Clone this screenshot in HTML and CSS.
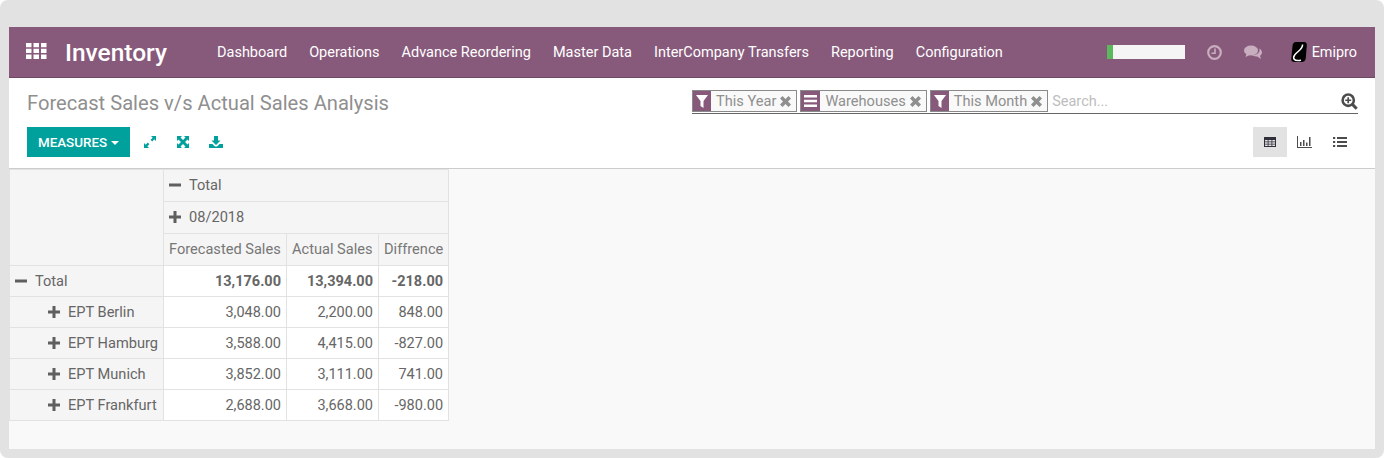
FILE: index.html
```html
<!DOCTYPE html>
<html lang="en">
<head>
<meta charset="utf-8">
<title>Forecast Sales v/s Actual Sales Analysis</title>
<link rel="stylesheet" href="styles.css">
</head>
<body>
<div class="frame">
  <div class="app">
    <nav class="navbar">
      <svg class="apps" width="21" height="16" viewBox="0 0 21 16"><path fill="#fff" d="M0 0h5.500v4.300H0zM7.500 0h5.500v4.300H7.500zM15 0h5.500v4.300H15zM0 5.800h5.500v4.300H0zM7.500 5.800h5.500v4.300H7.500zM15 5.800h5.500v4.300H15zM0 11.600h5.500v4.300H0zM7.500 11.600h5.500v4.300H7.500zM15 11.600h5.500v4.300H15z"/></svg>
      <span class="brand">Inventory</span>
      <ul class="menu">
        <li>Dashboard</li>
        <li>Operations</li>
        <li>Advance Reordering</li>
        <li>Master Data</li>
        <li>InterCompany Transfers</li>
        <li>Reporting</li>
        <li>Configuration</li>
      </ul>
      <div class="systray">
        <div class="progress"><div class="progress-fill"></div></div>
        <svg class="clock" width="15" height="15" viewBox="0 0 15 15"><circle cx="7.500" cy="7.500" r="6.300" fill="none" stroke="#c8aebf" stroke-width="2.200"/><path fill="none" stroke="#c8aebf" stroke-width="1.600" d="M8 3.500v4.700H4.500"/></svg>
        <svg class="chat" width="18" height="15" viewBox="0 0 18 15"><ellipse cx="7" cy="5.500" rx="7" ry="5" fill="#c8aebf"/><path fill="#c8aebf" d="M2.500 8.500 1.500 12 6 10z"/><path fill="#c8aebf" d="M15.300 3.600C16.900 4.500 18 5.900 18 7.400c0 1.400-.8 2.500-2 3.300l1 3.300-3.800-2.500c-2 .2-4-.2-5.300-1.400 4.500.4 8.800-2.300 7.400-6.500z"/></svg>
        <svg class="avatar" width="16" height="20" viewBox="0 0 16 20"><path fill="#000" d="M5 0h8c2.200 0 3 1.500 2.800 3.500l-1 12.500c-.2 2.500-1.800 4-4 4H3.500C1 20 0 18.500 .3 16.500L1.500 4C1.800 1.500 3 0 5 0z"/><path fill="none" stroke="#fff" stroke-width="1.500" d="M11.500 2.500C12 6 9 8 6 10.500 3 13 2 15 3 17c1 1.500 4 1.800 7 1.200"/></svg>
        <span class="user">Emipro</span>
      </div>
    </nav>
    <header class="panel">
      <div class="panel-left">
        <h1 class="title">Forecast Sales v/s Actual Sales Analysis</h1>
        <div class="actions">
          <button class="measures" type="button">MEASURES<span class="caret"></span></button>
          <svg class="tool" width="14" height="14" viewBox="0 0 14 14"><path fill="#00a09d" d="M8 1h5v5l-1.700-1.700L9.200 6.400 7.600 4.800l2.100-2.100zM6 13H1V8l1.700 1.700 2.100-2.100 1.600 1.600-2.100 2.100z"/></svg>
          <svg class="tool" width="14" height="14" viewBox="0 0 14 14"><path fill="#00a09d" d="M1 1h5L4.500 2.500 7 5l2.500-2.500L8 1h5v5l-1.500-1.500L9 7l2.500 2.500L13 8v5H8l1.500-1.500L7 9l-2.500 2.500L6 13H1V8l1.500 1.500L5 7 2.500 4.500 1 6z"/></svg>
          <svg class="tool" width="14" height="14" viewBox="0 0 14 14"><path fill="#00a09d" d="M5 1h4v4.500h2.500L7 10 2.500 5.500H5zM0 9h3.500L6 11.500h2L10.500 9H14v4H0z"/></svg>
        </div>
      </div>
      <div class="panel-right">
        <div class="search">
          <div class="facet">
            <span class="facet-icon"><svg width="12" height="13" viewBox="0 0 12 13"><path fill="#fff" d="M0 0h12L7.500 6v7l-3-2V6z"/></svg></span>
            <span class="facet-label">This Year</span>
            <svg class="facet-x" width="11" height="11" viewBox="0 0 11 11"><path fill="#8f8f8f" d="M2.500 0 5.500 3 8.500 0 11 2.500 8 5.500l3 3L8.500 11l-3-3-3 3L0 8.500l3-3-3-3z"/></svg>
          </div>
          <div class="facet">
            <span class="facet-icon wide"><svg width="13" height="12" viewBox="0 0 13 12"><path fill="#fff" d="M0 0h13v2.500H0zM0 4.700h13v2.500H0zM0 9.400h13v2.500H0z"/></svg></span>
            <span class="facet-label">Warehouses</span>
            <svg class="facet-x" width="11" height="11" viewBox="0 0 11 11"><path fill="#8f8f8f" d="M2.500 0 5.500 3 8.500 0 11 2.500 8 5.500l3 3L8.500 11l-3-3-3 3L0 8.500l3-3-3-3z"/></svg>
          </div>
          <div class="facet">
            <span class="facet-icon"><svg width="12" height="13" viewBox="0 0 12 13"><path fill="#fff" d="M0 0h12L7.500 6v7l-3-2V6z"/></svg></span>
            <span class="facet-label">This Month</span>
            <svg class="facet-x" width="11" height="11" viewBox="0 0 11 11"><path fill="#8f8f8f" d="M2.500 0 5.500 3 8.500 0 11 2.500 8 5.500l3 3L8.500 11l-3-3-3 3L0 8.500l3-3-3-3z"/></svg>
          </div>
          <span class="placeholder">Search...</span>
          <svg class="zoom" width="17" height="17" viewBox="0 0 16 16"><circle cx="6.800" cy="6.800" r="5.300" fill="none" stroke="#4c4c4c" stroke-width="2.400"/><path stroke="#4c4c4c" stroke-width="2.800" d="m10.500 10.500 4.300 4.300"/><path stroke="#4c4c4c" stroke-width="1.600" d="M6.800 4v5.600M4 6.800h5.600"/></svg>
        </div>
        <div class="views">
          <span class="view active"><svg width="12" height="10" viewBox="0 0 12 10"><path fill="#2f2f3a" d="M0 0h12v10H0z"/><path fill="#e2e2e2" d="M1 3h2.700v1.500H1zM4.500 3h3v1.500h-3zM8.300 3H11v1.500H8.300zM1 5.300h2.700v1.500H1zM4.500 5.300h3v1.500h-3zM8.300 5.300H11v1.500H8.300zM1 7.600h2.700v1.500H1zM4.500 7.600h3v1.500h-3zM8.300 7.600H11v1.500H8.300z"/></svg></span>
          <span class="view"><svg width="15" height="12" viewBox="0 0 15 12"><path fill="#4c4c4c" d="M0 0h1v11h14v1H0zM3 6h1.500v4H3zM6 4h1.500v6H6zM9 6.500h1.500V10H9zM12 1h1.500v9H12z"/></svg></span>
          <span class="view last"><svg width="14" height="10" viewBox="0 0 14 10"><path fill="#4c4c4c" d="M0 0h2.200v2H0zM4 0h10v2H4zM0 4h2.200v2H0zM4 4h10v2H4zM0 8h2.200v2H0zM4 8h10v2H4z"/></svg></span>
        </div>
      </div>
    </header>
    <main class="content">
      <table class="pivot">
        <colgroup>
          <col class="col-row">
          <col class="col-forecast">
          <col class="col-actual">
          <col class="col-diff">
        </colgroup>
        <thead>
          <tr>
            <th class="corner" rowspan="3"></th>
            <th class="head" colspan="3"><svg class="sign" width="12" height="12" viewBox="0 0 12 12"><path fill="#5f5f5f" d="M0 4.500h12v3H0z"/></svg>Total</th>
          </tr>
          <tr>
            <th class="head" colspan="3"><svg class="sign" width="12" height="12" viewBox="0 0 12 12"><path fill="#5f5f5f" d="M4.500 0h3v4.500H12v3H7.500V12h-3V7.500H0v-3h4.500z"/></svg>08/2018</th>
          </tr>
          <tr>
            <th class="measure">Forecasted Sales</th>
            <th class="measure">Actual Sales</th>
            <th class="measure">Diffrence</th>
          </tr>
        </thead>
        <tbody>
          <tr class="total">
            <th class="row"><svg class="sign" width="12" height="12" viewBox="0 0 12 12"><path fill="#5f5f5f" d="M0 4.500h12v3H0z"/></svg>Total</th>
            <td>13,176.00</td><td>13,394.00</td><td>-218.00</td>
          </tr>
          <tr>
            <th class="row sub"><svg class="sign" width="12" height="12" viewBox="0 0 12 12"><path fill="#5f5f5f" d="M4.500 0h3v4.500H12v3H7.500V12h-3V7.500H0v-3h4.500z"/></svg>EPT Berlin</th>
            <td>3,048.00</td><td>2,200.00</td><td>848.00</td>
          </tr>
          <tr>
            <th class="row sub"><svg class="sign" width="12" height="12" viewBox="0 0 12 12"><path fill="#5f5f5f" d="M4.500 0h3v4.500H12v3H7.500V12h-3V7.500H0v-3h4.500z"/></svg>EPT Hamburg</th>
            <td>3,588.00</td><td>4,415.00</td><td>-827.00</td>
          </tr>
          <tr>
            <th class="row sub"><svg class="sign" width="12" height="12" viewBox="0 0 12 12"><path fill="#5f5f5f" d="M4.500 0h3v4.500H12v3H7.500V12h-3V7.500H0v-3h4.500z"/></svg>EPT Munich</th>
            <td>3,852.00</td><td>3,111.00</td><td>741.00</td>
          </tr>
          <tr>
            <th class="row sub"><svg class="sign" width="12" height="12" viewBox="0 0 12 12"><path fill="#5f5f5f" d="M4.500 0h3v4.500H12v3H7.500V12h-3V7.500H0v-3h4.500z"/></svg>EPT Frankfurt</th>
            <td>2,688.00</td><td>3,668.00</td><td>-980.00</td>
          </tr>
        </tbody>
      </table>
    </main>
  </div>
</div>
</body>
</html>
```
FILE: styles.css
```css
* { box-sizing: border-box; }
html, body { margin: 0; padding: 0; background: #fff; }
body { font-family: Roboto, "Liberation Sans", sans-serif; font-size: 14px; color: #666; }
.frame { width: 1384px; height: 458px; padding: 27px 9px 9px; background: #e2e2e2; border-radius: 8px; }
.app { height: 422px; display: flex; flex-direction: column; background: #fff; }
.navbar { height: 51px; flex: none; display: flex; align-items: center; padding: 0 18px 0 17px; background: #875a7b; border-bottom: 1px solid #6f4a65; color: #fff; }
.apps { flex: none; margin: 0 0 3px 0; }
.brand { margin: 1px 0 0 18px; font-size: 24.500px; font-weight: 500; width: 152px; }
.menu { display: flex; gap: 22px; margin: 0; padding: 0; list-style: none; font-size: 14.500px; }
.systray { margin-left: auto; display: flex; align-items: center; }
.progress { width: 78px; height: 14px; background: #f5f5f5; margin-right: 22px; }
.progress-fill { width: 6px; height: 14px; background: #5cb85c; }
.clock { margin-right: 22px; }
.chat { margin-right: 29px; }
.avatar { margin-right: 5px; }
.user { font-size: 14.400px; }
.panel { height: 91px; flex: none; display: flex; justify-content: space-between; padding: 0 17px 0 18px; background: #fff; border-bottom: 1px solid #ccc; }
.title { margin: 13px 0 0; font-size: 20.150px; font-weight: 400; line-height: 24px; color: #8f8f8f; }
.actions { display: flex; align-items: center; margin-top: 12px; }
.measures { width: 103px; height: 30px; margin-right: 13px; padding: 0; border: 0; background: #00a09d; color: #fff; font: 500 13.400px Roboto, sans-serif; }
.caret { display: inline-block; margin-left: 4px; vertical-align: 2px; border-top: 4px solid #fff; border-left: 4px solid transparent; border-right: 4px solid transparent; }
.tool { margin-right: 19px; }
.panel-right { width: 666px; }
.search { height: 25px; margin-top: 11px; display: flex; align-items: center; gap: 3px; border-bottom: 1px solid #666; padding-bottom: 1px; }
.facet { height: 22px; margin-top: 1px; display: flex; align-items: center; background: #f9f9f9; border: 1px solid #8a8a8a; font-size: 14.600px; color: #8f8f8f; }
.facet-icon { width: 18px; height: 20px; display: flex; align-items: center; justify-content: center; background: #875a7b; }
.facet-icon.wide { width: 19px; }
.facet-label { margin: 0 0 0 5px; }
.facet-x { margin: 1px 5px 0 4px; }
.placeholder { margin: 1px 0 0 1px; color: #bdbdbd; font-size: 14.500px; }
.zoom { margin: 1px 0 0 auto; }
.views { display: flex; justify-content: flex-end; margin-top: 13px; }
.view { width: 34px; height: 30px; display: flex; align-items: center; justify-content: center; }
.view.active { background: #e2e2e2; }
.view.last { width: 37px; }
.content { flex: 1; background: #f9f9f9; }
.pivot { border-collapse: collapse; background: #fff; font-size: 14.600px; table-layout: fixed; width: 440px; }
.col-row { width: 154px; }
.col-forecast { width: 123px; }
.col-actual { width: 92px; }
.col-diff { width: 70px; }
.pivot th, .pivot td { border: 1px solid #e2e2e2; font-weight: 400; white-space: nowrap; }
.pivot thead tr { height: 32px; }
.pivot tbody tr { height: 31px; }
.pivot th { background: #f5f5f5; text-align: left; }
.head { padding: 0 5px 2px; }
.measure { padding: 0 5px 2px; color: #777; }
.pivot td { padding: 0 5px; text-align: right; font-size: 14.500px; }
.row { padding: 0 5px; }
.pivot .sub { padding-left: 38px; }
.total td { font-weight: 700; }
.sign { margin-right: 8px; vertical-align: -1px; }
```
